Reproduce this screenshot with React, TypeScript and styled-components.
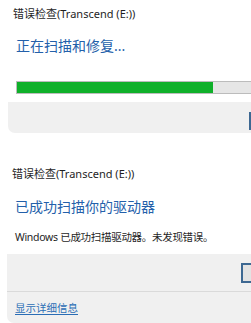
import { createGlobalStyle, styled } from "styled-components";

const GlobalStyle = createGlobalStyle`
  html, body {
    margin: 0;
    padding: 0;
    background: #ffffff;
  }
  body {
    font-family: "Noto Sans", "Noto Sans CJK SC", sans-serif;
    color: #1b1b1b;
  }
`;

const Page = styled.div`
  width: 251px;
  height: 323px;
  overflow: hidden;
  display: flex;
  flex-direction: column;
  background: #ffffff;
`;

const Window = styled.div<{ $gap?: number; $left?: number }>`
  display: flex;
  flex-direction: column;
  padding-left: ${(p) => p.$left ?? 8}px;
  margin-top: ${(p) => p.$gap ?? 0}px;
`;

const Title = styled.div`
  height: 28px;
  line-height: 28px;
  padding-left: 5px;
  font-size: 11px;
  color: #1e1e1e;
  white-space: nowrap;
`;

const Heading = styled.div<{ $gap: number }>`
  margin-top: ${(p) => p.$gap}px;
  padding-left: 8px;
  height: 22px;
  line-height: 22px;
  font-size: 14px;
  color: #2360aa;
  white-space: nowrap;
`;

const Message = styled.div`
  margin-top: 11px;
  padding-left: 8px;
  height: 16px;
  line-height: 16px;
  font-size: 10.5px;
  letter-spacing: -0.3px;
  color: #1e1e1e;
  white-space: nowrap;
`;

const Track = styled.div`
  margin-top: 24px;
  margin-left: 8px;
  width: 260px;
  height: 13px;
  box-sizing: border-box;
  border: 1px solid #bcbcbc;
  background: #e6e6e6;
  flex-shrink: 0;
`;

const Fill = styled.div`
  height: 100%;
  background: #0fb02a;
`;

const Footer = styled.div<{ $gap: number }>`
  margin-top: ${(p) => p.$gap}px;
  background: #f0f0f0;
  border-bottom-left-radius: 7px;
  display: flex;
  flex-direction: column;
`;

const ButtonRow = styled.div<{ $height: number; $top: number; $left: number }>`
  height: ${(p) => p.$height}px;
  box-sizing: border-box;
  padding-top: ${(p) => p.$top}px;
  padding-left: ${(p) => p.$left}px;
  display: flex;
`;

const Button = styled.div<{ $height: number }>`
  width: 75px;
  height: ${(p) => p.$height}px;
  flex-shrink: 0;
  box-sizing: border-box;
  border: 2px solid #3d6892;
  background: #e3e3e3;
`;

const Divider = styled.div`
  height: 1px;
  background: #dadada;
`;

const LinkRow = styled.div`
  height: 31px;
  display: flex;
  align-items: center;
  padding-left: 8px;
`;

const DetailLink = styled.span`
  font-size: 10.5px;
  color: #2a6db5;
  text-decoration: underline;
  text-underline-offset: 2px;
`;

export default function App() {
  const progress = 0.76;
  return (
    <>
      <GlobalStyle />
      <Page>
        <Window>
          <Title>错误检查(Transcend (E:))</Title>
          <Heading $gap={7}>正在扫描和修复...</Heading>
          <Track>
            <Fill style={{ width: `${progress * 100}%` }} />
          </Track>
          <Footer $gap={8}>
            <ButtonRow $height={31} $top={10} $left={241}>
              <Button $height={18} />
            </ButtonRow>
          </Footer>
        </Window>
        <Window $gap={27} $left={7}>
          <Title>错误检查(Transcend (E:))</Title>
          <Heading $gap={8}>已成功扫描你的驱动器</Heading>
          <Message>Windows 已成功扫描驱动器。未发现错误。</Message>
          <Footer $gap={9}>
            <ButtonRow $height={37} $top={9} $left={234}>
              <Button $height={20} />
            </ButtonRow>
            <Divider />
            <LinkRow>
              <DetailLink>显示详细信息</DetailLink>
            </LinkRow>
          </Footer>
        </Window>
      </Page>
    </>
  );
}
